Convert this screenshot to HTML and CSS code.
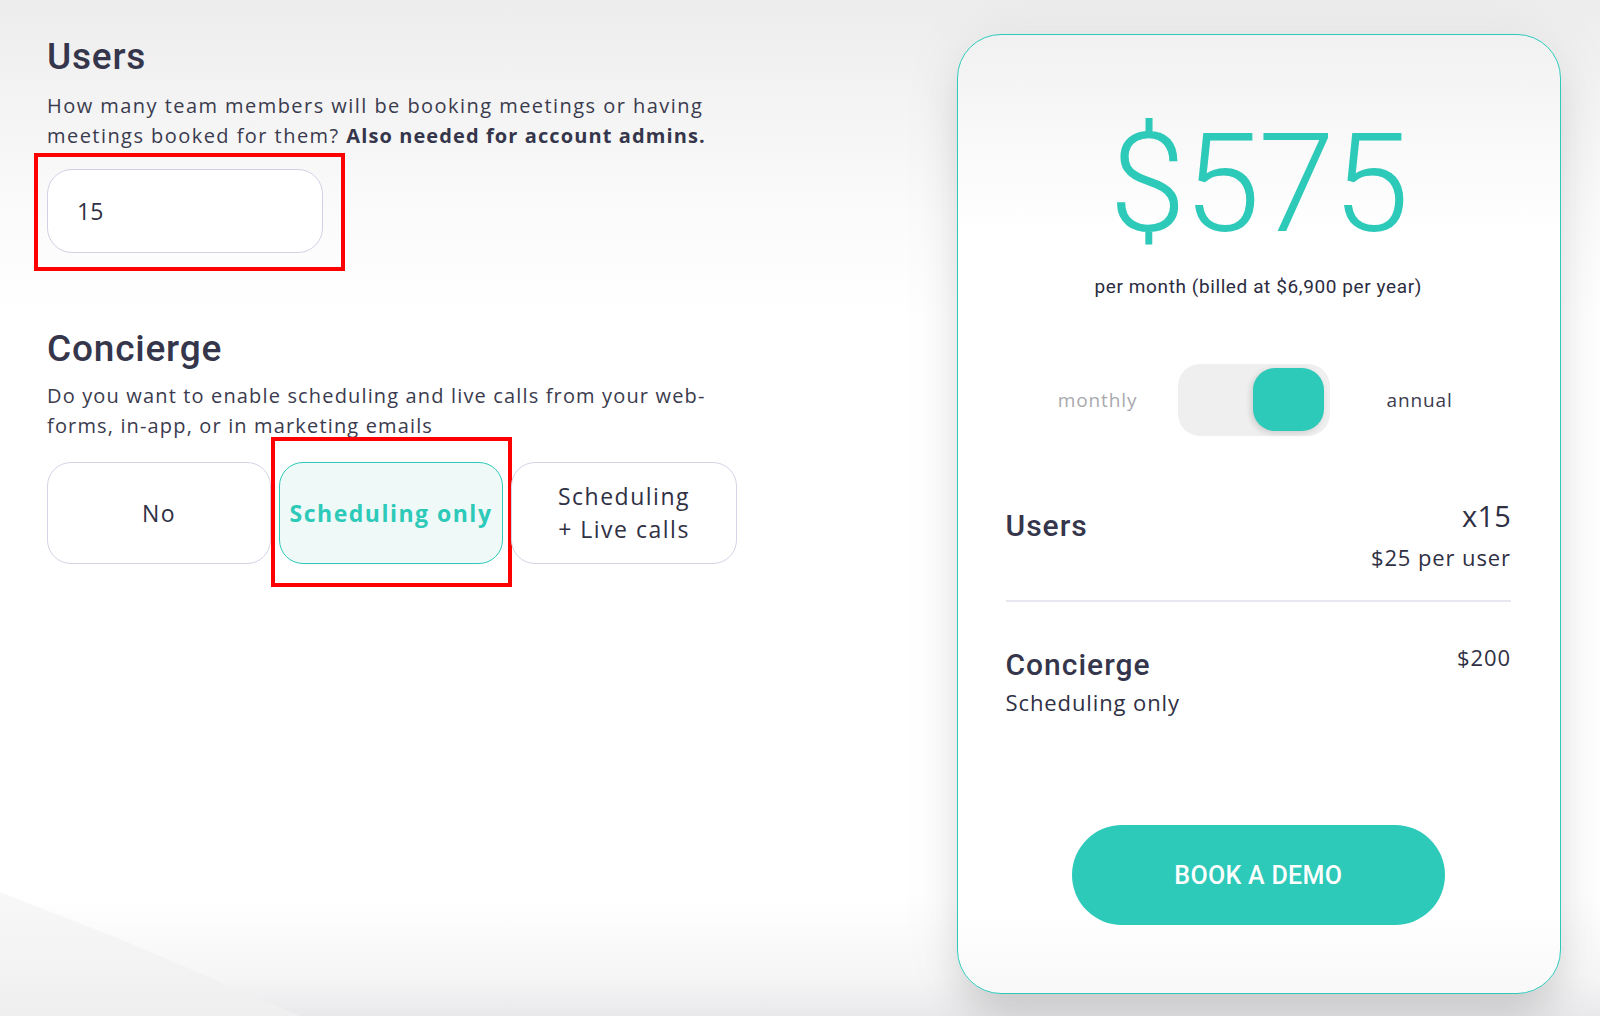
FILE: index.html
```html
<!DOCTYPE html>
<html lang="en">
<head>
<meta charset="utf-8">
<title>Pricing calculator</title>
<link rel="stylesheet" href="styles.css">
</head>
<body>
<div class="page">
  <main class="config">
    <section class="block">
      <h2 class="block-title">Users</h2>
      <p class="block-desc">How many team members will be booking meetings or having meetings booked for them? <strong>Also needed for account admins.</strong></p>
      <div class="field-wrap">
        <input class="field" type="text" value="15">
        <span class="annot annot-field"></span>
      </div>
    </section>
    <section class="block block-concierge">
      <h2 class="block-title">Concierge</h2>
      <p class="block-desc">Do you want to enable scheduling and live calls from your web-forms, in-app, or in marketing emails</p>
      <div class="options">
        <button class="option">No</button>
        <button class="option selected">Scheduling only<span class="annot annot-option"></span></button>
        <button class="option option-wide">Scheduling<br>+ Live calls</button>
      </div>
    </section>
  </main>

  <aside class="summary">
    <div class="price">$575</div>
    <div class="billing">per month (billed at $6,900 per year)</div>
    <div class="period">
      <span class="period-label muted">monthly</span>
      <span class="switch"><span class="knob"></span></span>
      <span class="period-label">annual</span>
    </div>
    <div class="line">
      <div class="line-title line-title-users">Users</div>
      <div class="line-values">
        <div class="line-qty">x15</div>
        <div class="line-sub line-sub-rate">$25 per user</div>
      </div>
    </div>
    <hr class="divider">
    <div class="line line-concierge">
      <div>
        <div class="line-title line-title-concierge">Concierge</div>
        <div class="line-sub line-sub-option">Scheduling only</div>
      </div>
      <div class="line-sub line-sub-price">$200</div>
    </div>
    <button class="cta">BOOK A DEMO</button>
  </aside>
</div>
</body>
</html>
```

FILE: styles.css
```css
* {
  box-sizing: border-box;
}

html, body {
  margin: 0;
  padding: 0;
}

body {
  position: relative;
  width: 1600px;
  height: 1016px;
  overflow: hidden;
  font-family: "Open Sans", "Liberation Sans", sans-serif;
  color: #35364b;
  background:
    linear-gradient(to top, #e9e9eb 0, #f6f6f7 40px, rgba(255,255,255,0) 120px),
    linear-gradient(to bottom, #ededed 0, #f4f4f4 110px, #fbfbfb 220px, #ffffff 320px);
}

body::before {
  content: "";
  position: absolute;
  left: 0;
  bottom: 0;
  width: 300px;
  height: 124px;
  background: linear-gradient(to bottom, #f8f8f8, #efefef);
  clip-path: polygon(0 0, 40% 38%, 100% 100%, 0 100%);
}

.page {
  position: relative;
  display: flex;
  align-items: flex-start;
  padding: 34px 39px 0 47px;
}

/* ---------- left column ---------- */

.config {
  width: 690px;
}

.block-title {
  margin: 1px 0 0;
  font-family: Roboto, "Liberation Sans", sans-serif;
  font-weight: 500;
  font-size: 37px;
  line-height: 44px;
  letter-spacing: 0.8px;
  color: #35364b;
}

.block-desc {
  margin: 12px 0 0;
  font-size: 20px;
  line-height: 30px;
  letter-spacing: 1.45px;
  color: #3a3b4e;
}

.block-desc strong {
  font-weight: 700;
  color: #35364b;
  letter-spacing: 1.1px;
}

.field-wrap {
  position: relative;
  width: 276px;
  margin-top: 18px;
}

.field {
  display: block;
  width: 276px;
  height: 84px;
  padding: 0 0 0 29px;
  border: 1.5px solid #d2d0e6;
  border-radius: 25px;
  background: #fff;
  font-family: "Open Sans", "Liberation Sans", sans-serif;
  font-size: 23px;
  color: #2f3044;
  outline: none;
}

.annot {
  position: absolute;
  border: 4px solid #ff0000;
  pointer-events: none;
}

.annot-field {
  left: -13px;
  top: -16px;
  width: 311px;
  height: 118px;
}

.block-concierge {
  margin-top: 74px;
}

.block-concierge .block-desc {
  margin-top: 10px;
  letter-spacing: 1.15px;
}

.options {
  display: flex;
  gap: 8px;
  margin-top: 21px;
}

.option {
  position: relative;
  width: 224px;
  height: 102px;
  padding: 0;
  border: 1.5px solid #d5d3e7;
  border-radius: 24px;
  background: #fff;
  font-family: "Open Sans", "Liberation Sans", sans-serif;
  font-size: 23px;
  line-height: 33px;
  letter-spacing: 1.5px;
  color: #2f3044;
  text-align: center;
}

.option-wide {
  width: 226px;
}

.option.selected {
  border-color: #2dc9b9;
  background: #eff9f7;
  color: #2dc9b9;
  font-weight: 700;
  letter-spacing: 1.5px;
}

.annot-option {
  left: -9px;
  top: -26px;
  width: 241px;
  height: 150px;
}

/* ---------- summary card ---------- */

.summary {
  display: flex;
  flex-direction: column;
  width: 604px;
  height: 960px;
  margin-left: auto;
  padding: 80px 49px 68px 47.5px;
  border: 1.5px solid #2dc9b9;
  border-radius: 44px;
  background: linear-gradient(to bottom, #f1f1f1 0, #f8f8f8 90px, #ffffff 200px, #ffffff 880px, #f8f8f9 100%);
  box-shadow: 0 0 60px 6px rgba(0, 0, 0, 0.05), 0 28px 40px -6px rgba(0, 0, 0, 0.13);
}

.price {
  font-family: Roboto, "Liberation Sans", sans-serif;
  font-weight: 300;
  font-size: 138px;
  line-height: 138px;
  letter-spacing: -2px;
  color: #2dc9b9;
  text-align: center;
}

.billing {
  margin-top: 22px;
  font-family: Roboto, "Liberation Sans", sans-serif;
  font-size: 19px;
  line-height: 24px;
  letter-spacing: 0.6px;
  color: #2b2c3f;
  text-align: center;
}

.period {
  display: flex;
  align-items: center;
  justify-content: center;
  margin-top: 65px;
  padding-right: 6px;
}

.period-label {
  font-size: 19px;
  letter-spacing: 0.9px;
  color: #3a3b4e;
}

.period-label.muted {
  color: #a9a9ad;
  margin-right: 41px;
}

.switch {
  display: flex;
  justify-content: flex-end;
  width: 152px;
  height: 72px;
  padding: 4px 6px 5px;
  margin-right: 56px;
  border-radius: 22px;
  background: #efefef;
}

.knob {
  width: 71px;
  height: 63px;
  border-radius: 22px;
  background: #2dc9b9;
  box-shadow: -2px 2px 6px rgba(0, 0, 0, 0.14);
}

.line {
  display: flex;
  justify-content: space-between;
  align-items: flex-start;
  margin-top: 60px;
}

.line-title {
  font-family: Roboto, "Liberation Sans", sans-serif;
  font-weight: 500;
  font-size: 30px;
  line-height: 36px;
  letter-spacing: 1px;
  color: #35364b;
}

.line-title-users {
  margin-top: 12px;
}

.line-title-concierge {
  margin-top: 3px;
}

.line-values {
  text-align: right;
}

.line-qty {
  font-size: 29px;
  line-height: 40px;
  letter-spacing: 0.2px;
  color: #2f3044;
}

.line-sub {
  font-size: 22px;
  line-height: 30px;
  letter-spacing: 0.9px;
  color: #2f3044;
}

.line-sub-rate {
  margin-top: 6px;
}

.line-sub-option {
  margin-top: 4px;
}

.line-sub-price {
  margin-top: -2px;
}

.divider {
  height: 1.5px;
  margin: 28px 0 0;
  border: 0;
  background: #e8e7f1;
}

.line-concierge {
  margin-top: 42px;
}

.cta {
  align-self: center;
  width: 373px;
  height: 100px;
  margin-top: auto;
  padding: 0;
  border: 0;
  border-radius: 50px;
  background: #2dc9b9;
  font-family: Roboto, "Liberation Sans", sans-serif;
  font-weight: 500;
  font-size: 25px;
  letter-spacing: 0.3px;
  color: #ffffff;
}
```
